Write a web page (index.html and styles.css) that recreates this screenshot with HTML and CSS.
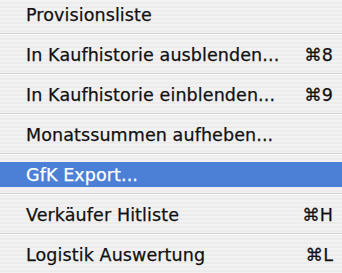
FILE: index.html
```html
<!DOCTYPE html>
<html lang="de">
<head>
  <meta charset="UTF-8">
  <title>Menü</title>
  <link rel="stylesheet" href="styles.css">
</head>
<body>
  <div class="menu">
    <div class="item"><span class="label">Provisionsliste</span></div>
    <div class="sep"></div>
    <div class="item"><span class="label">In Kaufhistorie ausblenden...</span><span class="key">⌘8</span></div>
    <div class="sep"></div>
    <div class="item"><span class="label">In Kaufhistorie einblenden...</span><span class="key">⌘9</span></div>
    <div class="sep"></div>
    <div class="item"><span class="label">Monatssummen aufheben...</span></div>
    <div class="sep"></div>
    <div class="item selected"><span class="label">GfK Export...</span></div>
    <div class="sep"></div>
    <div class="item"><span class="label">Verkäufer Hitliste</span><span class="key">⌘H</span></div>
    <div class="sep"></div>
    <div class="item"><span class="label">Logistik Auswertung</span><span class="key">⌘L</span></div>
  </div>
</body>
</html>
```

FILE: styles.css
```css
body{
    margin: 0;
    padding: 0;
}
.menu{
    width: 342px;
    height: 273px;
    padding-top: 2px;
    box-sizing: border-box;
    background: repeating-linear-gradient(to bottom, #f2f2f2 0, #f2f2f2 2px, #ececec 2px, #ececec 4px);
    font-family: "DejaVu Sans", "Liberation Sans", sans-serif;
    font-size: 17.5px;
    letter-spacing: 0.1px;
    color: #111;
    -webkit-text-stroke: 0.25px currentColor;
}
.item{
    height: 25px;
    display: flex;
    align-items: center;
    justify-content: space-between;
    padding: 0 9px 0 26px;
}
.item.selected{
    background: #4c80d6;
    color: #fff;
}
.sep{
    height: 15px;
    display: flex;
    flex-direction: column;
    padding-top: 6px;
    box-sizing: border-box;
}
.sep::before{
    content: "";
    height: 1px;
    background: #d2d2d2;
}
.sep::after{
    content: "";
    height: 1px;
    background: #fafafa;
}
```
